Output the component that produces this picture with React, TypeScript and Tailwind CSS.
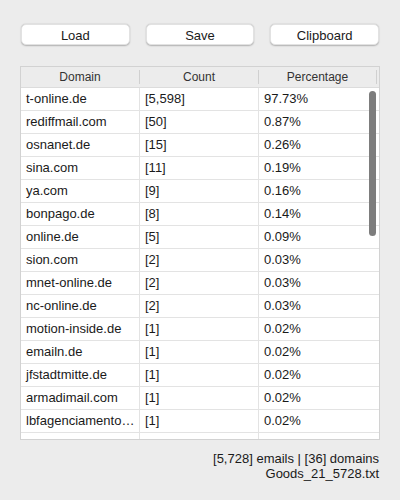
import React from "react";

const rows: [string, string, string][] = [
  ["t-online.de", "[5,598]", "97.73%"],
  ["rediffmail.com", "[50]", "0.87%"],
  ["osnanet.de", "[15]", "0.26%"],
  ["sina.com", "[11]", "0.19%"],
  ["ya.com", "[9]", "0.16%"],
  ["bonpago.de", "[8]", "0.14%"],
  ["online.de", "[5]", "0.09%"],
  ["sion.com", "[2]", "0.03%"],
  ["mnet-online.de", "[2]", "0.03%"],
  ["nc-online.de", "[2]", "0.03%"],
  ["motion-inside.de", "[1]", "0.02%"],
  ["emailn.de", "[1]", "0.02%"],
  ["jfstadtmitte.de", "[1]", "0.02%"],
  ["armadimail.com", "[1]", "0.02%"],
  ["lbfagenciamento…", "[1]", "0.02%"],
  ["", "", ""],
];

export default function App() {
  return (
    <div
      className="w-[400px] h-[500px] bg-[#ececec] text-[#1a1a1a] flex flex-col"
      style={{ fontFamily: '"Liberation Sans", Arial, sans-serif' }}
    >
      <div className="flex gap-[16px] px-[21px] pt-[24px]">
        {["Load", "Save", "Clipboard"].map((t) => (
          <button
            key={t}
            className="flex-1 h-[21px] bg-white rounded-[5px] text-[13px] leading-[21px] text-[#1a1a1a] shadow-[0_0.5px_1.5px_rgba(0,0,0,0.25)] border border-[#e2e2e2]"
          >
            {t}
          </button>
        ))}
      </div>

      <div className="mx-[20px] mt-[21px] h-[374px] border border-[#d2d2d2] bg-white relative overflow-hidden">
        <div className="flex h-[21px] bg-[#ececec] border-b border-[#dcdcdc] text-[12px] text-[#333]">
          <div className="w-[119px] flex items-center justify-center border-r border-[#d0d0d0] my-[3px]">Domain</div>
          <div className="w-[119px] flex items-center justify-center border-r border-[#d0d0d0] my-[3px]">Count</div>
          <div className="w-[118px] flex items-center justify-center border-r border-[#d0d0d0] my-[3px]">Percentage</div>
        </div>
        {rows.map((r, i) => (
          <div key={i} className="flex h-[23px] border-b border-[#e3e3e3] text-[13px]">
            <div className="w-[119px] border-r border-[#e3e3e3] pl-[5px] flex items-center whitespace-nowrap overflow-hidden">{r[0]}</div>
            <div className="w-[119px] border-r border-[#e3e3e3] pl-[5px] flex items-center">{r[1]}</div>
            <div className="flex-1 pl-[5px] flex items-center">{r[2]}</div>
          </div>
        ))}
        <div className="absolute left-[348px] top-[24px] w-[7px] h-[145px] rounded-full bg-[#7d7d7d]" />
      </div>

      <div className="px-[21px] pt-[11px] text-right text-[13px] leading-[15px] text-[#1a1a1a]">
        <div>[5,728] emails | [36] domains</div>
        <div>Goods_21_5728.txt</div>
      </div>
    </div>
  );
}
